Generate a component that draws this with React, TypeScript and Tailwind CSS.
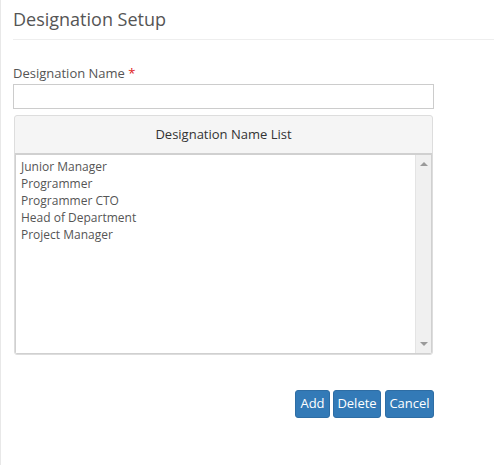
const items = ["Junior Manager", "Programmer", "Programmer CTO", "Head of Department", "Project Manager"];

export default function App() {
  return (
    <div className="min-h-[465px] w-[494px] bg-white border-l border-[#e8e8e8] font-['Open_Sans',sans-serif] text-[#555]">
      <div className="pl-[12px]">
        <div className="h-[40px] border-b border-[#eeeeee] pt-[7px]">
          <h1 className="text-[18px] leading-[24px] text-[#555]">Designation Setup</h1>
        </div>
        <div className="w-[421px] pt-[24px]">
          <label className="block text-[13px] leading-[18px] text-[#555]">
            Designation Name <span className="text-[#e02020]">*</span>
          </label>
          <input className="mt-[2px] block h-[25px] w-[421px] border border-[#cccccc] bg-white px-2 text-[13px] outline-none" />
          <div className="ml-[1px] mt-[6px] w-[419px] overflow-hidden rounded-[3px] border border-[#dddddd] bg-[#f5f5f5]">
            <div className="h-[37px] text-center text-[13px] leading-[37px] text-[#333]">Designation Name List</div>
            <div className="flex h-[201px] border-t-2 border-[#d0d0d0] border-x border-b bg-white">
              <ul className="flex-1 px-[5px] pt-[3px] text-[12px] leading-[17px] text-[#555]">
                {items.map((it) => (
                  <li key={it}>{it}</li>
                ))}
              </ul>
              <div className="flex w-[16px] flex-col items-center justify-between border-l border-[#e4e4e4] bg-[#f0f0f0] py-[7px]">
                <div className="h-0 w-0 border-x-[4px] border-b-[4px] border-x-transparent border-b-[#9a9a9a]" />
                <div className="h-0 w-0 border-x-[4px] border-t-[4px] border-x-transparent border-t-[#9a9a9a]" />
              </div>
            </div>
          </div>
          <div className="mt-[35px] flex justify-end">
            <button className="h-[28px] w-[35px] rounded-[3px] border border-[#2e6da4] bg-[#337ab7] text-[13px] text-white">Add</button>
            <button className="ml-[3px] h-[28px] w-[48px] rounded-[3px] border border-[#2e6da4] bg-[#337ab7] text-[13px] text-white">Delete</button>
            <button className="ml-[4px] h-[28px] w-[49px] rounded-[3px] border border-[#2e6da4] bg-[#337ab7] text-[13px] text-white">Cancel</button>
          </div>
        </div>
      </div>
    </div>
  );
}
